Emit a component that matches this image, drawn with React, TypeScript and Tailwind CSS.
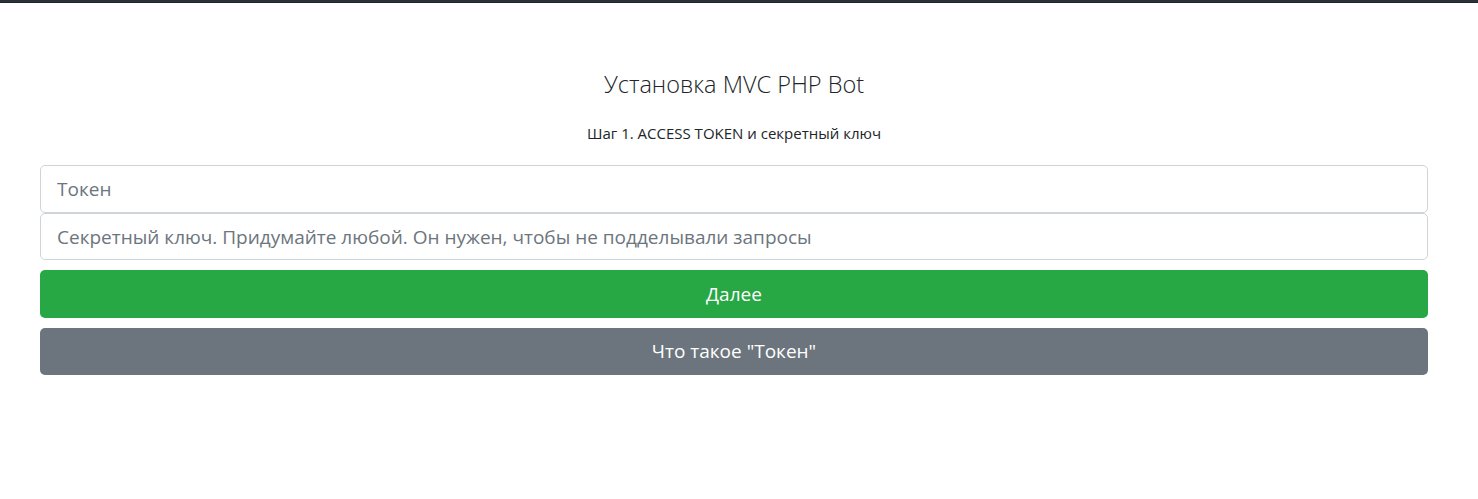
import React from "react";

export default function App() {
  return (
    <div className="min-h-[499px] w-full bg-white" style={{ fontFamily: '"Open Sans", "Noto Sans", sans-serif' }}>
      <div className="h-[3px] bg-[#2b3139] border-b border-[#1c2633]" />
      <div className="pl-[40px] pr-[50px]">
        <h4 className="mt-[67px] text-center text-[23.5px] leading-[29px] font-light text-[#212529]">
          Установка MVC PHP Bot
        </h4>
        <p className="mt-[23px] text-center text-[15px] leading-[22px] text-[#212529]">
          Шаг 1. ACCESS TOKEN и секретный ключ
        </p>
        <div className="mt-[21px] flex flex-col">
          <input
            className="h-[48px] w-full rounded-[5px] border border-[#ced4da] px-4 text-[19px] text-[#495057] outline-none placeholder:text-[#6c757d]"
            placeholder="Токен"
          />
          <input
            className="h-[47px] w-full rounded-[5px] border border-[#ced4da] px-4 text-[19px] text-[#495057] outline-none placeholder:text-[#6c757d]"
            placeholder="Секретный ключ. Придумайте любой. Он нужен, чтобы не подделывали запросы"
          />
          <button className="mt-[10px] h-[48px] w-full rounded-[5px] bg-[#28a745] text-[19px] text-white">
            Далее
          </button>
          <button className="mt-[10px] h-[47px] w-full rounded-[5px] bg-[#6c757d] text-[19px] text-white">
            Что такое "Токен"
          </button>
        </div>
      </div>
    </div>
  );
}
